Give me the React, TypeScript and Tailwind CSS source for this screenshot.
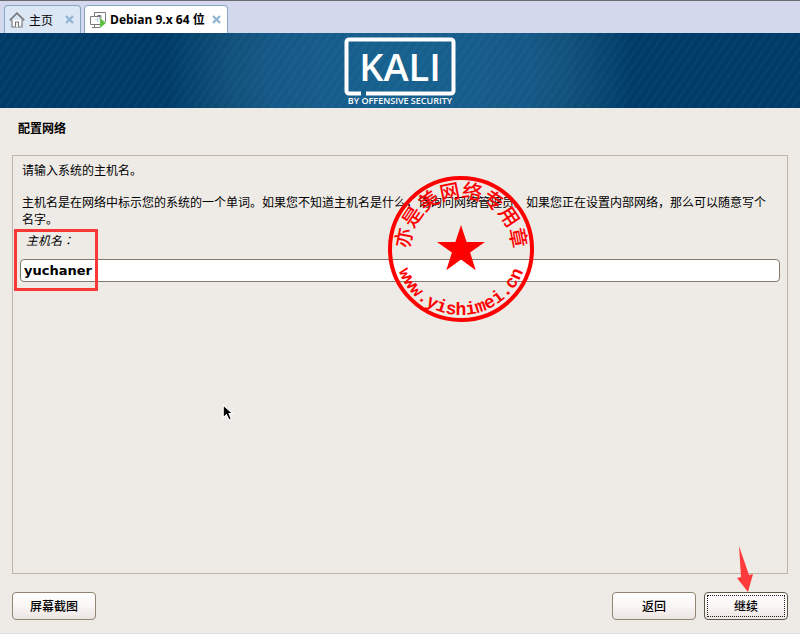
import React, { useState } from 'react';

interface CloseProps {
  label: string;
}

const CloseButton: React.FC<CloseProps> = ({ label }) => (
  <button type="button" aria-label={label} className="mr-1 p-0.5">
    <svg width="9" height="9" viewBox="0 0 9 9" fill="none" stroke="#8fb3d0" strokeWidth="2.2">
      <path d="M1 1l7 7M8 1L1 8" />
    </svg>
  </button>
);

const HomeIcon = () => (
  <svg width="16" height="16" viewBox="0 0 16 16" fill="#fff" stroke="#77787c" strokeWidth="1.2" className="shrink-0">
    <path d="M3 8v7h10V8" />
    <path d="M.8 8.4L8 1.2l7.2 7.2" fill="none" strokeWidth="1.6" />
    <path d="M6.5 15v-5h3v5" />
  </svg>
);

const MachineIcon = () => (
  <svg width="17" height="16" viewBox="0 0 17 16" fill="none" stroke="#7b7b7b" className="shrink-0">
    <path d="M5 7.500h3M7.500 5v3M7.500 10v-2h3" stroke="#c3d3e6" />
    <path d="M4.500 4V.5h11v9H15" />
    <path d="M10 12.500H.5v-8h9.500V7M7.500 4.500v-1h3.500V6M2 15.500h8M4.500 13v2" />
    <path d="M10 6l6 5-6 5z" fill="#5fc044" stroke="none" />
  </svg>
);

const Logo = () => (
  <svg width="112" height="70" viewBox="0 0 112 70" role="img" aria-label="KALI BY OFFENSIVE SECURITY">
    <path
      d="M17 56.500H5a2.500 2.500 0 0 1-2.500-2.500V5A2.500 2.500 0 0 1 5 2.500h102a2.500 2.500 0 0 1 2.500 2.500v49a2.500 2.500 0 0 1-2.500 2.500H22"
      fill="none"
      stroke="#fff"
      strokeWidth="4"
    />
    <text x="56" y="44" textAnchor="middle" fill="#fff" className="font-['Open_Sans',sans-serif] text-[38px] font-semibold">
      KALI
    </text>
    <text x="56" y="67" textAnchor="middle" fill="#fff" className="font-['Open_Sans',sans-serif] text-[9px] font-semibold">
      BY OFFENSIVE SECURITY
    </text>
  </svg>
);

const Seal = () => (
  <svg width="146" height="146" viewBox="-73 -73 146 146" fill="#f00" className="absolute left-1/2 top-5 -ml-3">
    <defs>
      <path id="seal-top" d="M-51 0A51 51 0 0 1 51 0" />
      <path id="seal-bottom" d="M-66 0A66 66 0 0 0 66 0" />
    </defs>
    <circle r="71" fill="none" stroke="#f00" strokeWidth="4" />
    <path d="M0-24l5.600 17.100h18.400L9.100 3.500l5.600 17.700L0 10.500l-14.700 10.700 5.600-17.700L-24-6.900h18.400z" />
    <text textAnchor="middle" className="font-['Noto_Sans_CJK_SC',sans-serif] text-[20px] font-medium">
      <textPath href="#seal-top" startOffset="50%">亦是美网络专用章</textPath>
    </text>
    <text textAnchor="middle" className="font-['Liberation_Mono',monospace] text-[18px] font-bold">
      <textPath href="#seal-bottom" startOffset="50%">www.yishimei.cn</textPath>
    </text>
  </svg>
);

const Arrow = () => (
  <svg width="18" height="48" viewBox="0 0 18 48" className="absolute right-[34px] bottom-[26px]">
    <path d="M3 0L13 29l4-1-5 18L1 32l4-1z" fill="#ff3a3a" />
  </svg>
);

const Pointer = () => (
  <svg width="12" height="18" viewBox="0 0 11 17" className="absolute left-[209px] top-[248px]">
    <path d="M1 1v12l3-3 2.500 5 2-1L6.500 9H10z" stroke="#fff" strokeWidth="1" />
  </svg>
);

interface ButtonProps {
  children: React.ReactNode;
  focused?: boolean;
}

const PanelButton: React.FC<ButtonProps> = ({ children, focused }) => (
  <button
    type="button"
    className={`h-7 w-[84px] rounded border bg-linear-to-b from-white via-[#faf6f5] to-[#ebe5e2] p-0.5 text-xs font-medium ${
      focused ? 'border-[#5e584c]' : 'border-[#938575]'
    }`}
  >
    <span
      className={`flex h-full items-center justify-center border ${
        focused ? 'border-dotted border-[#222]' : 'border-transparent'
      }`}
    >
      {children}
    </span>
  </button>
);

const App: React.FC = () => {
  const [hostname, setHostname] = useState('yuchaner');

  return (
    <div className="min-h-screen bg-white pr-0.5 pb-px font-['Noto_Sans_CJK_SC',sans-serif] text-xs text-black">
      <div className="flex min-h-[calc(100vh-1px)] flex-col border-b border-[#dedede] bg-[#eeebe7]">
        <nav className="flex h-[33px] items-end gap-[3px] border-t border-[#6c6b73] bg-[#d4d8ec] px-1">
          <div className="flex h-7 w-[77px] items-center rounded-t border border-b-0 border-[#86a8c5] bg-[#dce7f5] pl-1">
            <HomeIcon />
            <a href="#home" className="ml-1 grow whitespace-nowrap">主页</a>
            <CloseButton label="关闭主页" />
          </div>
          <div className="flex h-7 w-36 items-center rounded-t border border-b-0 border-[#86a8c5] bg-white pl-[5px]">
            <MachineIcon />
            <a href="#debian" className="ml-[3px] grow whitespace-nowrap font-['Open_Sans','Noto_Sans_CJK_SC',sans-serif] font-bold">
              Debian 9.x 64 位
            </a>
            <CloseButton label="关闭 Debian" />
          </div>
        </nav>

        <header className="flex h-[75px] justify-center bg-[#003b68] bg-[repeating-linear-gradient(125deg,transparent_0_4px,rgba(120,190,220,0.04)_4px_7px),radial-gradient(circle_at_center,#17628f_0,#165887_130px,#105078_175px,#003b68_235px)] pt-1">
          <Logo />
        </header>

        <h1 className="px-[18px] pt-3 text-xs leading-4 font-bold">配置网络</h1>

        <main className="relative mx-3 mt-[19px] flex-1 border border-[#bfb5a6] px-[7px] pt-[5px]">
          <div className="pr-3 pl-0.5 leading-[17px]">
            <p>请输入系统的主机名。</p>
            <p className="mt-[15px]">
              主机名是在网络中标示您的系统的一个单词。如果您不知道主机名是什么，请询问网络管理员。如果您正在设置内部网络，那么可以随意写个名字。
            </p>
          </div>
          <label htmlFor="hostname" className="mt-1 block pl-1.5 font-['Noto_Sans_CJK_TC',sans-serif] leading-[17px] italic">
            主机名：
          </label>
          <input
            id="hostname"
            value={hostname}
            onChange={(e) => setHostname(e.target.value)}
            className="mt-[11px] block h-[23px] w-full rounded border border-[#85796b] bg-white px-[3px] font-['DejaVu_Sans',sans-serif] text-[13px] font-bold outline-none"
          />
          <div className="pointer-events-none absolute left-px top-[73px] h-[62px] w-[84px] border-3 border-[#fb3838]" />
          <Seal />
          <Pointer />
        </main>

        <footer className="flex justify-between px-3 pt-[18px] pb-[13px]">
          <PanelButton>屏幕截图</PanelButton>
          <div className="flex gap-2">
            <PanelButton>返回</PanelButton>
            <div className="relative">
              <PanelButton focused>继续</PanelButton>
              <Arrow />
            </div>
          </div>
        </footer>
      </div>
    </div>
  );
};

export default App;
